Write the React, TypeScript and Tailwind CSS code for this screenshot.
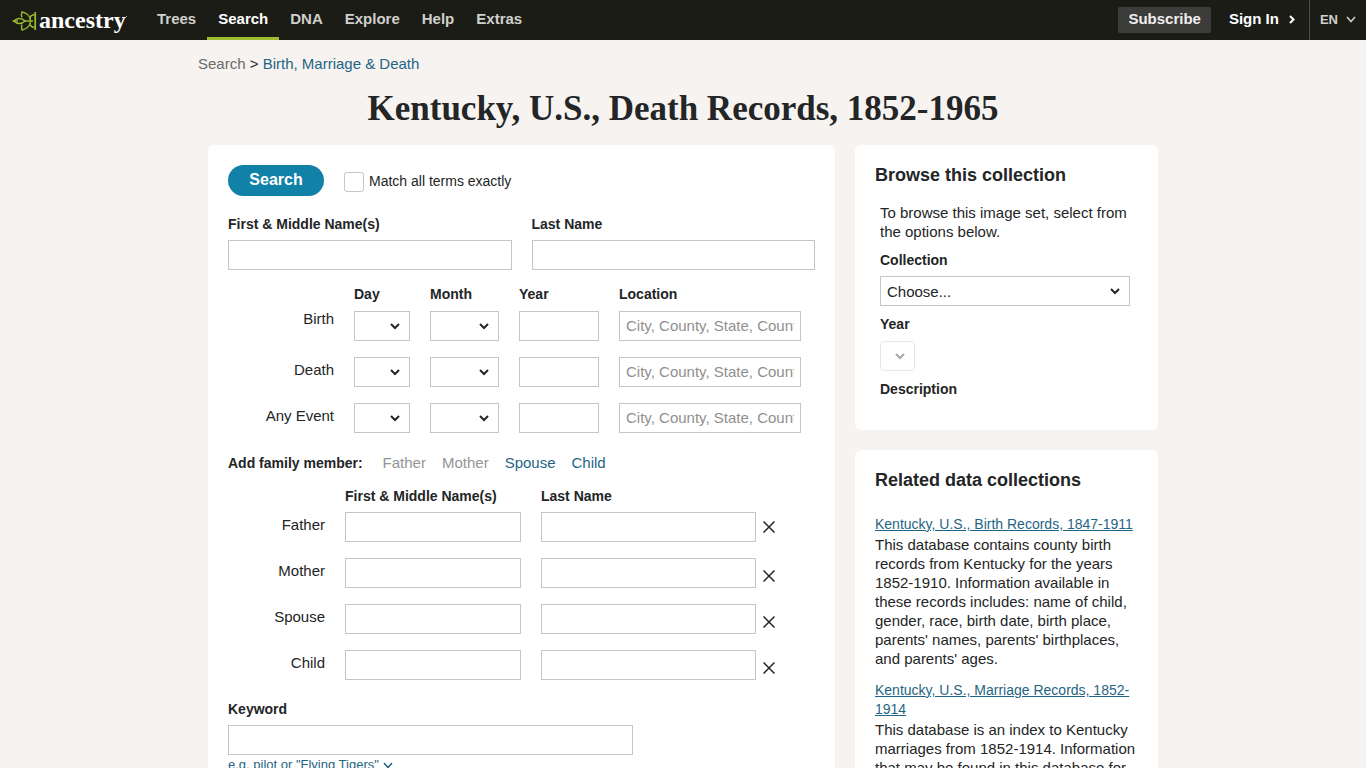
import React from 'react';

const navItems = ['Trees', 'Search', 'DNA', 'Explore', 'Help', 'Extras'];

const eventRows = [
  { name: 'Birth', leading: 'leading-4' },
  { name: 'Death', leading: 'leading-[26px]' },
  { name: 'Any Event', leading: 'leading-[26px]' },
];

const familyRows = [
  { name: 'Father', iconOffset: 'pt-[9px]' },
  { name: 'Mother', iconOffset: 'pt-3' },
  { name: 'Spouse', iconOffset: 'pt-3' },
  { name: 'Child', iconOffset: 'pt-3' },
];

const related = [
  {
    title: 'Kentucky, U.S., Birth Records, 1847-1911',
    text: "This database contains county birth records from Kentucky for the years 1852-1910. Information available in these records includes: name of child, gender, race, birth date, birth place, parents' names, parents' birthplaces, and parents' ages.",
  },
  {
    title: 'Kentucky, U.S., Marriage Records, 1852-1914',
    text: 'This database is an index to Kentucky marriages from 1852-1914. Information that may be found in this database for',
  },
];

const fieldClass = 'block h-[30px] w-full min-w-0 border border-[#c4c5c5] bg-white px-1.5 text-[15px] outline-none placeholder:text-[#8f9090]';
const labelClass = 'block text-sm leading-4 font-bold';

const Logo = () => (
  <a href="#home" aria-label="Ancestry home" className="flex h-10 w-[146px] shrink-0 items-center pl-3">
    <svg width="25" height="22" viewBox="0 0 25 22" fill="none" stroke="#9cbe30" strokeWidth="1.4" className="mt-px shrink-0">
      <path d="M23.2 2v18" strokeWidth="1.7" />
      {/* Left leaf with its stem */}
      <path d="M0.5 11H6" />
      <path d="M2 11C5 7.6 9.5 7.6 13 11C9.500 14.400 5 14.400 2 11Z" />
      {/* Upper and lower leaves */}
      <path d="M10 7.500C9.200 5.500 9.300 3.500 10 2C15 3 18.500 6.500 18.500 11" />
      <path d="M10 14.500C9.200 16.500 9.300 18.500 10 20C15 19 18.500 15.500 18.500 11" />
      <path d="M13 11H21" />
      {/* Half leaves growing into the bar */}
      <path d="M22.500 4.500C20 5 18 6.500 17.500 8.500" />
      <path d="M22.500 17.500C20 17 18 15.500 17.500 13.500" />
    </svg>
    <span className="ml-0.5 font-['Liberation_Serif',serif] text-[24px] leading-8 font-bold text-white">ancestry</span>
    <span className="mb-2 size-px bg-white/60" />
  </a>
);

interface SelectProps {
  label: string;
  id?: string;
  disabled?: boolean;
  placeholder?: string;
}

const Select: React.FC<SelectProps> = ({ label, id, disabled, placeholder = '' }) => (
  <div className={`relative ${disabled ? 'opacity-40' : ''}`}>
    <select id={id} aria-label={label} disabled={disabled} className={`${fieldClass} appearance-none pt-0.5 ${disabled ? 'rounded-sm' : ''}`}>
      <option>{placeholder}</option>
    </select>
    <svg width="10" height="7" viewBox="0 0 10 7" fill="none" stroke="currentColor" strokeWidth="2" className="pointer-events-none absolute top-3 right-2.5" aria-hidden="true">
      <path d="M1 1L5 5L9 1" />
    </svg>
  </div>
);

const Header = () => (
  <header className="flex h-10 items-center bg-[#1c1c17] text-[15px] font-bold text-[#d0d0cc]">
    <Logo />
    <nav className="flex h-10">
      {navItems.map((item) => (
        <a
          key={item}
          href={`#${item}`}
          className={`flex h-10 items-center border-b-3 px-[11px] pt-0.5 ${item === 'Search' ? 'border-[#9cbe30] text-white' : 'border-transparent'}`}
        >
          {item}
        </a>
      ))}
    </nav>
    <div className="ml-auto flex h-10 items-center">
      <a href="#subscribe" className="flex h-[26px] items-center rounded-xs bg-[#3c3c3b] px-2.5 pb-0.5 text-[#efefed]">Subscribe</a>
      <a href="#signin" className="flex items-center gap-2.5 pr-3.5 pb-0.5 pl-[18px] text-white">
        Sign In
        <svg width="6" height="9" viewBox="0 0 6 9" fill="none" stroke="currentColor" strokeWidth="2" aria-hidden="true">
          <path d="M1 1L4.500 4.500L1 8" />
        </svg>
      </a>
      <button type="button" className="flex h-10 items-center gap-2 border-l border-[#4e4e4a] px-2.5 pb-px text-[13px]">
        EN
        <svg width="10" height="7" viewBox="0 0 10 7" fill="none" stroke="currentColor" strokeWidth="1.5" aria-hidden="true">
          <path d="M1 1L5 5.500L9 1" />
        </svg>
      </button>
    </div>
  </header>
);

const EventFields = () => (
  <div className="mt-4 grid grid-cols-[106px_56px_69px_80px_182px] gap-x-5 gap-y-4">
    <span />
    {['Day', 'Month', 'Year', 'Location'].map((column) => (
      <span key={column} className={`${labelClass} -mb-[7px]`}>{column}</span>
    ))}
    {eventRows.map(({ name, leading }) => (
      <React.Fragment key={name}>
        <span className={`text-right text-[15px] ${leading}`}>{name}</span>
        <Select label={`${name} day`} />
        <Select label={`${name} month`} />
        <input type="text" aria-label={`${name} year`} className={fieldClass} />
        <input type="text" aria-label={`${name} location`} placeholder="City, County, State, Country" className={`${fieldClass} pb-0.5`} />
      </React.Fragment>
    ))}
  </div>
);

const FamilySection = () => (
  <>
    <div className="mt-5 flex gap-4 text-[15px] leading-5">
      <span className="mr-1 text-sm leading-5 font-bold">Add family member:</span>
      <button type="button" disabled className="text-[#949595]">Father</button>
      <button type="button" disabled className="text-[#949595]">Mother</button>
      <button type="button" className="text-[#1f6584]">Spouse</button>
      <button type="button" className="text-[#1f6584]">Child</button>
    </div>
    <div className="mt-[15px] flex gap-5">
      <span className="w-[97px]" />
      <span className={`${labelClass} w-[176px]`}>First &amp; Middle Name(s)</span>
      <span className={labelClass}>Last Name</span>
    </div>
    <div className="mt-2 flex flex-col gap-4">
      {familyRows.map(({ name, iconOffset }) => (
        <div key={name} className="flex h-[30px] items-start">
          <span className="w-[97px] text-right text-[15px] leading-[26px]">{name}</span>
          <div className="ml-5 w-[176px]">
            <input type="text" aria-label={`${name} first and middle names`} className={fieldClass} />
          </div>
          <div className="ml-5 w-[215px]">
            <input type="text" aria-label={`${name} last name`} className={fieldClass} />
          </div>
          <button type="button" aria-label={`Remove ${name}`} className={`ml-[7px] ${iconOffset}`}>
            <svg width="12" height="12" viewBox="0 0 12 12" fill="none" stroke="currentColor" strokeWidth="1.5" className="block" aria-hidden="true">
              <path d="M.5.5L11.5 11.5M11.5.5L.5 11.5" />
            </svg>
          </button>
        </div>
      ))}
    </div>
  </>
);

const SearchForm = () => (
  <form className="min-w-0 flex-1 rounded-md bg-white p-5" onSubmit={(e) => e.preventDefault()}>
    <div className="flex items-center gap-5">
      <button type="submit" className="h-[31px] w-24 rounded-full bg-[#1281a8] pb-0.5 text-base font-bold text-white">Search</button>
      <label className="flex items-center gap-[5px] pt-0.5 text-sm leading-5">
        <input type="checkbox" className="size-5 appearance-none rounded-[3px] border border-[#c4c5c5] bg-white" />
        <span className="pb-0.5">Match all terms exactly</span>
      </label>
    </div>

    <div className="mt-5 grid grid-cols-2 gap-5">
      <div>
        <label htmlFor="first-name" className={labelClass}>First &amp; Middle Name(s)</label>
        <input id="first-name" type="text" className={`${fieldClass} mt-2`} />
      </div>
      <div>
        <label htmlFor="last-name" className={labelClass}>Last Name</label>
        <input id="last-name" type="text" className={`${fieldClass} mt-2`} />
      </div>
    </div>

    <EventFields />
    <FamilySection />

    <div className="mt-[21px] max-w-[405px]">
      <label htmlFor="keyword" className={labelClass}>Keyword</label>
      <input id="keyword" type="text" className={`${fieldClass} mt-2`} />
    </div>
    <button type="button" className="mt-px flex items-center gap-1 text-[13px] leading-[18px] text-[#1f6584]">
      e.g. pilot or "Flying Tigers"
      <svg width="10" height="7" viewBox="0 0 10 7" fill="none" stroke="currentColor" strokeWidth="1.5" aria-hidden="true">
        <path d="M1 1L5 5.500L9 1" />
      </svg>
    </button>
  </form>
);

const Sidebar = () => (
  <aside className="flex w-[303px] shrink-0 flex-col gap-5">
    <section className="rounded-md bg-white px-5 pt-[18px] pb-[33px]">
      <h2 className="text-lg leading-6 font-bold">Browse this collection</h2>
      <div className="mt-4 pr-2 pl-[5px]">
        <p className="text-[15px] leading-[19px]">To browse this image set, select from the options below.</p>
        <label htmlFor="collection" className={`${labelClass} mt-[11px] mb-2`}>Collection</label>
        <Select id="collection" label="Collection" placeholder="Choose..." />
        <label htmlFor="collection-year" className={`${labelClass} mt-2.5 mb-[9px]`}>Year</label>
        <div className="w-[35px]">
          <Select id="collection-year" label="Year" disabled />
        </div>
        <h3 className={`${labelClass} mt-2.5`}>Description</h3>
      </div>
    </section>

    <section className="rounded-md bg-white px-5 pt-[18px] pb-5">
      <h2 className="mb-[23px] text-lg leading-6 font-bold">Related data collections</h2>
      {related.map(({ title, text }) => (
        <div key={title} className="mb-[13px] text-[15px] leading-[19px]">
          <a href="#collection" className="block text-sm leading-[19px] text-[#1f6584] underline">{title}</a>
          <p className="mt-px">{text}</p>
        </div>
      ))}
    </section>
  </aside>
);

export default function App() {
  return (
    <div className="min-h-screen bg-[#f6f3f0] font-['Liberation_Sans',sans-serif] text-[#232526]">
      <Header />
      <div className="mx-auto max-w-[970px] pt-3.5 pb-5">
        <nav aria-label="Breadcrumb" className="text-[15px] leading-5">
          <a href="#search" className="text-[#686b6c]">Search</a> &gt; <a href="#records" className="text-[#1f6584]">Birth, Marriage &amp; Death</a>
        </nav>
        <h1 className="mt-3.5 text-center font-['Liberation_Serif',serif] text-[35px] leading-[42px] font-bold">
          Kentucky, U.S., Death Records, 1852-1965
        </h1>
        <main className="mt-[15px] flex items-start gap-5 px-2.5">
          <SearchForm />
          <Sidebar />
        </main>
      </div>
    </div>
  );
}
